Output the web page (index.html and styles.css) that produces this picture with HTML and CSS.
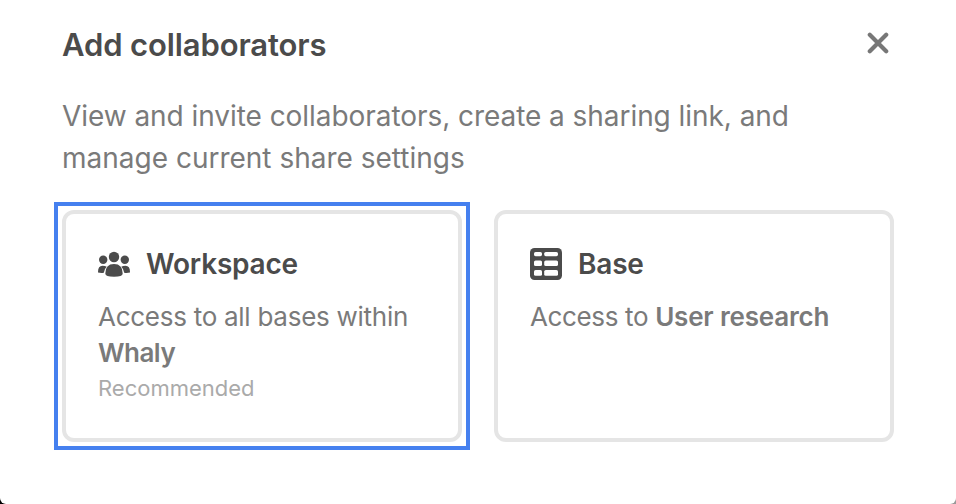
FILE: index.html
```html
<!DOCTYPE html>
<html lang="en">
<head>
<meta charset="utf-8">
<title>Add collaborators</title>
<link rel="stylesheet" href="styles.css">
</head>
<body>
<main class="dialog">
  <header class="header">
    <h1 class="title">Add collaborators</h1>
    <button class="close" aria-label="Close"><svg width="22" height="22" viewBox="0 0 22 22"><path d="M2.8 2.8L19.2 19.2M19.2 2.8L2.8 19.2"/></svg></button>
  </header>
  <p class="intro"><span class="intro-lead">View and invite collaborators, create a sharing link, and</span><br>manage current share settings</p>
  <div class="cards">
    <section class="card selected">
      <h2 class="card-title"><svg class="icon" width="32" height="32" viewBox="0 0 32 32"><circle cx="5.2" cy="11.8" r="4.2"/><circle cx="26.8" cy="11.8" r="4.2"/><circle cx="16" cy="9" r="5.2"/><path d="M0 24Q0 17.7 4.5 17.7Q7.2 17.7 8.7 18.8Q6.3 21 5.8 24.7Q3 25.2 0 24.5ZM32 24Q32 17.7 27.5 17.7Q24.8 17.7 23.3 18.8Q25.7 21 26.2 24.7Q29 25.2 32 24.5ZM7.3 25.5Q7.3 16 16 16Q24.7 16 24.7 25.5Q24.7 28.8 16 28.8Q7.3 28.8 7.3 25.5Z"/></svg>Workspace</h2>
      <p class="desc">Access to all bases within<br><strong class="name">Whaly</strong></p>
      <p class="note">Recommended</p>
    </section>
    <section class="card">
      <h2 class="card-title"><svg class="icon" width="32" height="32" viewBox="0 0 32 32"><rect width="32" height="32" rx="4.5"/><g fill="#fff"><rect x="4" y="4" width="8" height="4.2" rx="1.6"/><rect x="14.2" y="4" width="13.8" height="4.2" rx="1.6"/><rect x="4" y="12.5" width="8" height="5.5" rx="1.6"/><rect x="14.2" y="12.5" width="13.8" height="5.5" rx="1.6"/><rect x="4" y="22" width="8" height="5.8" rx="1.6"/><rect x="14.2" y="22" width="13.8" height="5.8" rx="1.6"/></g></svg>Base</h2>
      <p class="desc"><span class="access">Access to </span><strong>User research</strong></p>
    </section>
  </div>
</main>
</body>
</html>
```
FILE: styles.css
```css
* { box-sizing: border-box; }
body { margin: 0; background: linear-gradient(90deg, #000 50%, #999 50%); font-family: Inter, "Liberation Sans", sans-serif; color: #4b4b4b; }
.dialog { height: 504px; padding: 22px 62px 0; background: #fff; border-radius: 0 0 6px 6px; }
.header { display: flex; justify-content: space-between; height: 44px; }
h1, h2, p { margin: 0; }
.title { font-size: 31px; line-height: 45px; font-weight: 570; letter-spacing: -0.12px; }
.close { width: 22px; height: 22px; margin: 10px 5px 0 0; padding: 0; border: 0; background: none; }
.close svg { display: block; fill: none; stroke: #777; stroke-width: 4.2; stroke-linecap: round; }
.intro { margin-top: 29px; font-size: 28px; line-height: 42px; color: #7a7a7a; white-space: nowrap; }
.intro-lead { letter-spacing: -0.055px; }
.cards { display: grid; grid-template-columns: 400px 400px; gap: 32px; margin-top: 31px; }
.card { position: relative; height: 232px; border: 4px solid #e5e5e5; border-radius: 12px; padding: 30px 32px; white-space: nowrap; }
.selected::after { content: ""; position: absolute; inset: -12px; border: 4px solid #4580ef; }
.card-title { display: flex; align-items: center; gap: 16px; height: 40px; font-size: 28px; font-weight: 570; letter-spacing: -0.2px; }
.icon { fill: #4b4b4b; }
.desc { margin-top: 15px; font-size: 26px; line-height: 36px; letter-spacing: -0.27px; color: #7a7a7a; }
.access { letter-spacing: -0.36px; }
.desc strong { font-weight: 570; letter-spacing: -0.18px; }
.desc .name { letter-spacing: -0.5px; }
.note { font-size: 22px; line-height: 35px; color: #aaa; }
```
